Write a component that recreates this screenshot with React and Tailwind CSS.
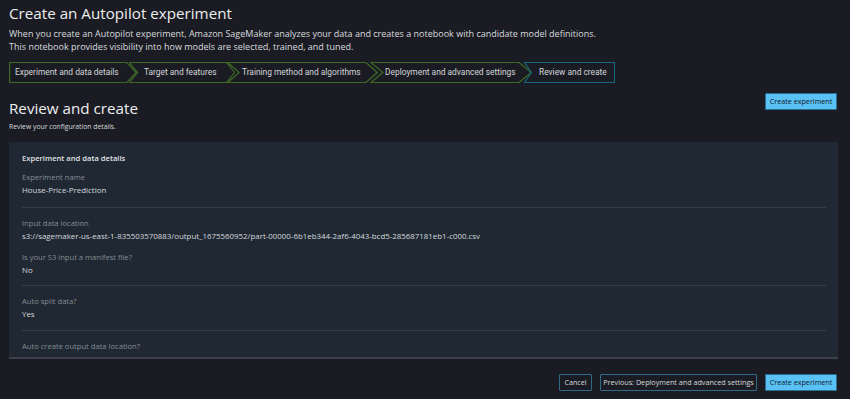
import React from 'react'

const steps = [
  { label: 'Experiment and data details', w: 'w-[128px]', first: true },
  { label: 'Target and features', w: 'w-[106px]' },
  { label: 'Training method and algorithms', w: 'w-[151px]' },
  { label: 'Deployment and advanced settings', w: 'w-[162px]' },
  { label: 'Review and create', w: 'w-[91px]', last: true },
]

function Step({ label, w, first, last }) {
  const pts = last
    ? '0.5,0.5 99.5,0.5 99.5,20.5 0.5,20.5 8,10.5'
    : first
      ? '0.5,0.5 92,0.5 99.5,10.5 92,20.5 0.5,20.5'
      : '0.5,0.5 92,0.5 99.5,10.5 92,20.5 0.5,20.5 8,10.5'
  return (
    <div className={`relative h-[21px] shrink-0 ${w} ${first ? '' : '-ml-[8px]'} flex items-center ${first ? 'pl-[6px]' : 'pl-[15px]'}`}>
      <svg className="absolute inset-0 h-full w-full" viewBox="0 0 100 21" preserveAspectRatio="none">
        <polygon
          points={pts}
          fill="none"
          stroke={last ? '#17687a' : '#3f6a26'}
          strokeWidth="1.2"
          vectorEffect="non-scaling-stroke"
        />
      </svg>
      <span className="relative whitespace-nowrap text-[8.4px] text-[#d3d6da] [font-family:Roboto,'Liberation_Sans',sans-serif]">
        {label}
      </span>
    </div>
  )
}

function Field({ label, value }) {
  return (
    <div className="flex flex-col">
      <div className="h-[13px] leading-[13px] text-[7.6px] text-[#868c94]">{label}</div>
      <div className="h-[13px] leading-[13px] text-[7.9px] text-[#d6d9dd]">{value}</div>
    </div>
  )
}

export default function App() {
  return (
    <div className="flex h-[399px] w-[850px] flex-col overflow-hidden bg-[#1b1c23] [font-family:'Open_Sans',sans-serif]">
      <div className="px-[9px]">
        <h1 className="mt-[3px] h-[20px] text-[15.2px] leading-[20px] text-[#eceef0]">Create an Autopilot experiment</h1>
        <p className="mt-[3.5px] text-[9px] leading-[13px] text-[#d8dbdf]">
          When you create an Autopilot experiment, Amazon SageMaker analyzes your data and creates a notebook with candidate model definitions.
          <br />
          This notebook provides visibility into how models are selected, trained, and tuned.
        </p>
        <div className="mt-[9.5px] flex">
          {steps.map((s) => (
            <Step key={s.label} {...s} />
          ))}
        </div>
        <div className="mt-[10px] flex items-start justify-between pr-[4px]">
          <div>
            <h2 className="mt-[5px] h-[20px] text-[15.2px] leading-[20px] text-[#eceef0]">Review and create</h2>
            <p className="mt-[4px] text-[6.8px] leading-[10px] text-[#d6d9dd]">Review your configuration details.</p>
          </div>
          <button className="h-[17px] w-[72px] whitespace-nowrap rounded-[1px] border border-[#2d6f93] bg-[#5ac1f4] text-[7.2px] text-[#0f1b2a]">
            Create experiment
          </button>
        </div>
      </div>
      <div className="mx-[9px] mt-[10px] mr-[12px] h-[217px] shrink-0 overflow-hidden border-b-2 border-[#3a414b] bg-[#1f2833] px-[13px] pt-[10px] pr-[12px]">
        <div className="h-[13px] text-[7.6px] font-semibold leading-[13px] text-[#e0e3e6]">Experiment and data details</div>
        <div className="border-b border-[#333d48] pt-[6px] pb-[10px]">
          <Field label="Experiment name" value="House-Price-Prediction" />
        </div>
        <div className="flex flex-col gap-[8px] border-b border-[#333d48] pt-[9px] pb-[8px]">
          <Field
            label="Input data location"
            value="s3://sagemaker-us-east-1-835503570883/output_1675560952/part-00000-6b1eb344-2af6-4043-bcd5-285687181eb1-c000.csv"
          />
          <Field label="Is your S3 input a manifest file?" value="No" />
        </div>
        <div className="border-b border-[#333d48] pt-[9px] pb-[9px]">
          <Field label="Auto split data?" value="Yes" />
        </div>
        <div className="pt-[9px]">
          <Field label="Auto create output data location?" value="No" />
        </div>
      </div>
      <div className="flex justify-end gap-[8px] pt-[15px] pr-[13px]">
        <button className="h-[17px] w-[33px] whitespace-nowrap rounded-[1px] border border-[#2f6a86] text-[7.2px] text-[#d6d9dd]">Cancel</button>
        <button className="h-[17px] w-[157px] whitespace-nowrap rounded-[1px] border border-[#2f6a86] text-[7.2px] text-[#d6d9dd]">
          Previous: Deployment and advanced settings
        </button>
        <button className="h-[17px] w-[72px] whitespace-nowrap rounded-[1px] border border-[#2d6f93] bg-[#5ac1f4] text-[7.2px] text-[#0f1b2a]">
          Create experiment
        </button>
      </div>
    </div>
  )
}
